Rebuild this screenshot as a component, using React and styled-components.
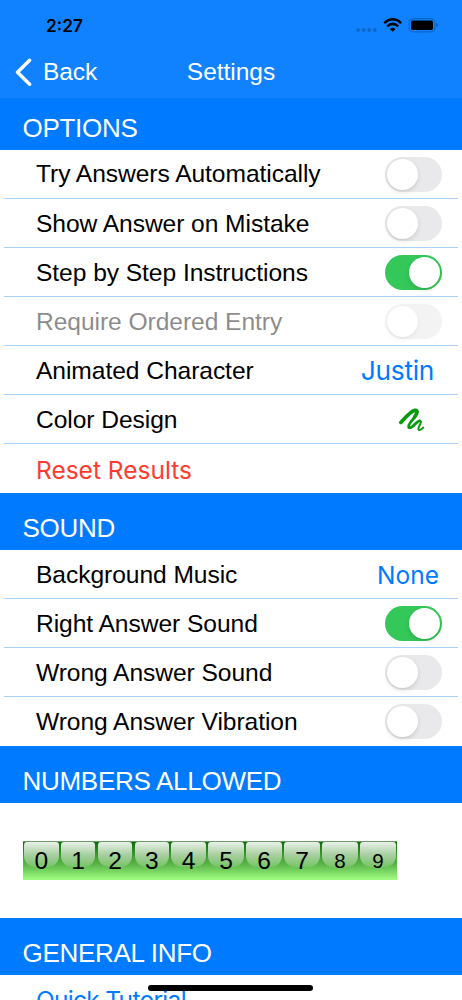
import React from 'react';
import styled, { createGlobalStyle } from 'styled-components';

const GlobalStyle = createGlobalStyle`
  body {
    margin: 0;
    background: #ffffff;
    overflow: hidden;
  }
`;

const Screen = styled.div`
  position: relative;
  display: flex;
  flex-direction: column;
  width: 462px;
  height: 1000px;
  overflow: hidden;
  background: #ffffff;
  color: #000000;
  font-family: "Liberation Sans", Arial, sans-serif;
  white-space: nowrap;
`;

const TopBar = styled.header`
  flex: none;
  height: 99px;
  box-sizing: border-box;
  background: #1082ff;
  border-bottom: 1px solid #0878ee;
`;

const StatusBar = styled.div`
  display: flex;
  align-items: center;
  justify-content: space-between;
  height: 50px;
  padding: 0 23px 0 46px;
`;

const Clock = styled.span`
  font-family: Inter, sans-serif;
  font-size: 17.2px;
  font-weight: 600;
`;

const StatusIcons = styled.svg`
  display: block;
`;

const NavBar = styled.nav`
  display: grid;
  grid-template-columns: 1fr auto 1fr;
  align-items: center;
  height: 44px;
  padding-left: 15px;
  padding-right: 15px;
  color: #ffffff;
  font-size: 24.5px;
`;

const BackButton = styled.div`
  display: flex;
  align-items: center;
  gap: 10px;
  letter-spacing: -0.1px;
`;

const Title = styled.div`
  letter-spacing: -0.02px;
`;

const SectionHeader = styled.h2`
  flex: none;
  box-sizing: border-box;
  height: ${({ $height }) => $height || 57}px;
  margin: 0;
  padding: ${({ $height }) => ($height ? 15 : 21)}px 0 0 22.5px;
  background: #007aff;
  color: #ffffff;
  font-size: 26px;
  font-weight: normal;
  line-height: 29px;
  letter-spacing: -0.28px;
`;

const Rows = styled.div`
  flex: none;
  padding: 0 4px;
`;

const Row = styled.div`
  display: flex;
  align-items: center;
  justify-content: space-between;
  box-sizing: border-box;
  height: 49px;
  padding: 0 ${({ $right }) => $right || 16}px 0 32px;
  border-bottom: 1px solid #a9d1ff;
  &:last-child {
    border-bottom: none;
  }
`;

const Label = styled.span`
  padding-top: ${({ $top }) => $top ?? 2}px;
  font-size: 24.6px;
  line-height: 28px;
  letter-spacing: -0.06px;
  opacity: ${({ $disabled }) => ($disabled ? 0.45 : 1)};
`;

const LinkText = styled.span`
  padding-top: ${({ $top }) => $top ?? 1}px;
  font-family: Inter, sans-serif;
  font-size: ${({ $size }) => $size || 24.5}px;
  letter-spacing: ${({ $spacing }) => $spacing || 0}px;
  color: ${({ $danger }) => ($danger ? '#ff3b30' : '#007aff')};
`;

const Track = styled.span`
  display: flex;
  box-sizing: border-box;
  justify-content: ${({ $on }) => ($on ? 'flex-end' : 'flex-start')};
  width: 57px;
  height: 35px;
  padding: 2px;
  border-radius: 18px;
  background: ${({ $on }) => ($on ? '#34c759' : '#e9e9eb')};
  opacity: ${({ $disabled }) => ($disabled ? 0.5 : 1)};
`;

const Knob = styled.span`
  width: 31px;
  height: 31px;
  border-radius: 50%;
  background: #ffffff;
  box-shadow: 0 2px 5px rgba(0, 0, 0, 0.12), 0 1px 1px rgba(0, 0, 0, 0.04);
`;

const NumbersPanel = styled.div`
  flex: none;
  box-sizing: border-box;
  height: 115px;
  padding: 38px 0 0 23px;
`;

const NumberStrip = styled.div`
  display: flex;
  width: 374px;
  height: 39px;
  box-sizing: border-box;
  border-top: 1px solid #6f9a6a;
  background: linear-gradient(#0c6b08 0%, #2f8f25 25%, #5cb74a 60%, #9cfa7e 97%);
`;

const NumberKey = styled.div`
  position: relative;
  flex: ${({ $wide }) => ($wide ? 38 : 36.8)} 1 0;
  display: flex;
  align-items: center;
  justify-content: center;
  font-size: ${({ $small }) => ($small ? 20.5 : 24.6)}px;
  &::before {
    content: '';
    position: absolute;
    top: 0;
    left: 1.3px;
    right: 1.3px;
    height: 25px;
    border-radius: 3px 3px 11px 11px;
    background: linear-gradient(#e9f1e8, #a9cfa2 50%, #78c566);
  }
`;

const Digit = styled.span`
  position: relative;
`;

const HomeIndicator = styled.div`
  position: absolute;
  left: 148px;
  bottom: 9px;
  width: 165px;
  height: 6px;
  border-radius: 3px;
  background: #000000;
`;

function Switch({ on, disabled }) {
  return (
    <Track $on={on} $disabled={disabled}>
      <Knob />
    </Track>
  );
}

function SwitchRow({ text, on, disabled, top }) {
  return (
    <Row>
      <Label $disabled={disabled} $top={top}>{text}</Label>
      <Switch on={on} disabled={disabled} />
    </Row>
  );
}

function Squiggle() {
  return (
    <svg width="28" height="28" viewBox="0 0 28 28" fill="none" stroke="#0a9a12" strokeLinecap="round" strokeLinejoin="round">
      <path d="M2.8 17.4C6.5 13.5 13 5.8 16.8 5.3C20.8 4.8 18.8 8.8 16.6 12" strokeWidth="3.7" />
      <path d="M17 11.4C14.5 15.4 9.3 20 10.8 22.4C13.4 24.8 18 16.4 21.4 15.8" strokeWidth="2.8" />
      <path d="M21.4 15.8C26 15.6 18.8 22.8 20.6 24.6C22 25.6 23.8 24.2 25.2 22.6" strokeWidth="2" />
    </svg>
  );
}

const numbers = ['0', '1', '2', '3', '4', '5', '6', '7', '8', '9'];

export default function App() {
  return (
    <Screen>
      <GlobalStyle />
      <TopBar>
        <StatusBar>
          <Clock>2:27</Clock>
          <StatusIcons width="84" height="18" viewBox="0 0 84 18">
            <g fill="#0d68cc">
              <circle cx="3" cy="14" r="2" />
              <circle cx="8.7" cy="14" r="2" />
              <circle cx="14.2" cy="14" r="2" />
              <circle cx="19.8" cy="14" r="2" />
            </g>
            <g fill="none" stroke="#000000" strokeWidth="2.5">
              <path d="M29.2 7.1Q37.7 -0.5 46.2 7.1" />
              <path d="M32.2 10.4Q37.7 5.4 43.2 10.4" />
            </g>
            <path d="M34.9 12.9Q37.7 10.7 40.5 12.9L37.7 15.8Z" />
            <rect x="54.2" y="2.7" width="25.6" height="13.2" rx="3.8" fill="none" stroke="#0c5fb9" />
            <rect x="56" y="4.6" width="22" height="9.4" rx="1.8" />
            <path d="M81.2 7q1.8 .4 1.8 2t-1.8 2Z" fill="#0c5fb9" />
          </StatusIcons>
        </StatusBar>
        <NavBar>
          <BackButton>
            <svg width="18" height="28" viewBox="0 0 18 28" fill="none" stroke="#ffffff" strokeWidth="3.4" strokeLinecap="round" strokeLinejoin="round">
              <path d="M14.6 2.2L2.5 14.2L14.6 26.2" />
            </svg>
            Back
          </BackButton>
          <Title>Settings</Title>
        </NavBar>
      </TopBar>

      <SectionHeader $height={51}>OPTIONS</SectionHeader>
      <Rows>
        <SwitchRow text="Try Answers Automatically" top={0} />
        <SwitchRow text="Show Answer on Mistake" />
        <SwitchRow text="Step by Step Instructions" on />
        <SwitchRow text="Require Ordered Entry" disabled />
        <Row $right={24}>
          <Label>Animated Character</Label>
          <LinkText $size={26.3} $spacing={-0.3}>Justin</LinkText>
        </Row>
        <Row $right={32}>
          <Label>Color Design</Label>
          <Squiggle />
        </Row>
        <Row>
          <LinkText $danger $top={2}>Reset Results</LinkText>
        </Row>
      </Rows>

      <SectionHeader>SOUND</SectionHeader>
      <Rows>
        <Row $right={19}>
          <Label>Background Music</Label>
          <LinkText>None</LinkText>
        </Row>
        <SwitchRow text="Right Answer Sound" on />
        <SwitchRow text="Wrong Answer Sound" />
        <SwitchRow text="Wrong Answer Vibration" top={0} />
      </Rows>

      <SectionHeader>NUMBERS ALLOWED</SectionHeader>
      <NumbersPanel>
        <NumberStrip>
          {numbers.map((n) => (
            <NumberKey key={n} $wide={n > '4'} $small={n > '7'}>
              <Digit>{n}</Digit>
            </NumberKey>
          ))}
        </NumberStrip>
      </NumbersPanel>

      <SectionHeader>GENERAL INFO</SectionHeader>
      <Rows>
        <Row>
          <LinkText $spacing={-0.7} $top={0}>Quick Tutorial</LinkText>
        </Row>
      </Rows>
      <HomeIndicator />
    </Screen>
  );
}
